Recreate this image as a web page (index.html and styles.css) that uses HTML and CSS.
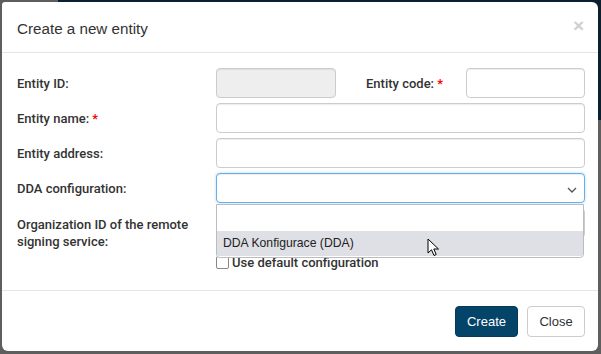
FILE: index.html
```html
<!DOCTYPE html>
<html>
<head>
<meta charset="utf-8">
<link rel="stylesheet" href="styles.css">
</head>
<body>
<div class="backdrop-dark"></div>
<div class="modal">
  <div class="modal-header">
    <h4 class="modal-title">Create a new entity</h4>
    <span class="close">×</span>
  </div>
  <div class="modal-body">
    <div class="row">
      <label class="lbl">Entity ID:</label>
      <div class="ctrl split">
        <input class="input input-id" disabled>
        <label class="lbl lbl-code">Entity code: <span class="req">*</span></label>
        <input class="input input-code">
      </div>
    </div>
    <div class="row">
      <label class="lbl">Entity name: <span class="req">*</span></label>
      <div class="ctrl"><input class="input"></div>
    </div>
    <div class="row">
      <label class="lbl">Entity address:</label>
      <div class="ctrl"><input class="input"></div>
    </div>
    <div class="row">
      <label class="lbl">DDA configuration:</label>
      <div class="ctrl select-wrap">
        <div class="input select">
          <svg class="chev" width="10" height="6" viewBox="0 0 10 6"><path d="M1 1 L5 5 L9 1" fill="none" stroke="#555" stroke-width="1.3"/></svg>
        </div>
        <div class="dropdown">
          <div class="opt"></div>
          <div class="opt active">DDA Konfigurace (DDA)</div>
          <svg class="cursor" width="14" height="20" viewBox="0 0 14 20"><path d="M1 1 L1 15 L4.5 11.8 L7 17.5 L9.2 16.5 L6.8 11 L11.5 11 Z" fill="#fff" stroke="#000" stroke-width="1" stroke-linejoin="round"/></svg>
        </div>
      </div>
    </div>
    <div class="row row-org">
      <label class="lbl">Organization ID of the remote signing service:</label>
      <div class="ctrl"><input class="input"></div>
    </div>
    <div class="row row-check">
      <span class="lbl"></span>
      <label class="check"><span class="box"></span>Use default configuration</label>
    </div>
  </div>
  <div class="modal-footer">
    <button class="btn btn-primary">Create</button>
    <button class="btn btn-default">Close</button>
  </div>
</div>
</body>
</html>
```

FILE: styles.css
```css
* { box-sizing: border-box; }
html, body { margin: 0; padding: 0; }
body {
  width: 601px;
  height: 354px;
  background: #5e5e5e;
  font-family: "Liberation Sans", Arial, sans-serif;
  color: #333;
  position: relative;
  overflow: hidden;
  padding: 2px 3px 3px 2px;
}
.backdrop-dark {
  position: absolute;
  left: 58px;
  top: 0;
  right: 0;
  height: 120px;
  background: #0b1f2e;
}
.modal {
  position: relative;
  width: 596px;
  height: 349px;
  background: #fff;
  border-radius: 3px 6px 6px 6px;
  display: flex;
  flex-direction: column;
}
.modal-header {
  height: 51px;
  border-bottom: 1px solid #e5e5e5;
  display: flex;
  align-items: center;
  justify-content: space-between;
  padding: 0 15px 0 15px;
}
.modal-title {
  margin: 0;
  font-size: 15.2px;
  font-weight: normal;
  color: #333;
  padding-top: 2px;
}
.close {
  font-size: 19px;
  font-weight: bold;
  color: #cfcfcf;
  line-height: 1;
  margin-right: -1px;
  margin-top: -3px;
}
.modal-body {
  padding: 15px 13px 0 15px;
  height: 238px;
  border-bottom: 1px solid #e5e5e5;
}
.row {
  display: flex;
  align-items: center;
  height: 30px;
  margin-bottom: 5px;
}
.lbl {
  width: 199px;
  flex: none;
  font-family: Roboto, "Liberation Sans", sans-serif;
  font-size: 13px;
  font-weight: 500;
  color: #333;
}
.req { color: #e00; }
.ctrl { flex: 1; min-width: 0; height: 30px; display: flex; align-items: center; }
.input {
  display: block;
  width: 100%;
  height: 30px;
  border: 1px solid #ccc;
  border-radius: 4px;
  background: #fff;
  box-shadow: inset 0 1px 1px rgba(0,0,0,0.075);
  font: inherit;
  margin: 0;
  padding: 0;
}
.input[disabled] { background: #eee; }
.input-id { width: 120px; flex: none; }
.lbl-code { width: 100px; margin-left: 30px; }
.input-code { flex: 1; width: auto; min-width: 0; }
.select-wrap { position: relative; }
.select {
  border-color: #66afe9;
  box-shadow: inset 0 1px 1px rgba(0,0,0,0.075), 0 0 3px rgba(102,175,233,0.5);
  position: relative;
}
.chev { position: absolute; right: 7px; top: 13px; }
.dropdown {
  position: absolute;
  left: 0;
  top: 31px;
  width: 368px;
  height: 54px;
  background: #fff;
  border: 1px solid #bcbcbc;
  border-radius: 0 0 4px 4px;
  z-index: 5;
}
.opt {
  height: 26px;
  font-size: 12.2px;
  color: #222;
  padding-left: 6px;
  line-height: 25px;
}
.opt.active { background: #dfdfe6; height: 25px; }
.cursor { position: absolute; left: 210px; top: 33px; }
.row-org { height: 30px; margin-bottom: 16px; align-items: flex-start; }
.row-org .lbl { line-height: 17px; padding-top: 8px; padding-right: 10px; }
.row-check { height: 16px; }
.check {
  display: flex;
  align-items: center;
  font-family: Roboto, "Liberation Sans", sans-serif;
  font-size: 13px;
  font-weight: 500;
  color: #333;
}
.box {
  width: 13px;
  height: 13px;
  border: 1px solid #888;
  border-radius: 2px;
  margin-right: 3px;
  background: #fff;
}
.modal-footer {
  flex: 1;
  display: flex;
  justify-content: flex-end;
  align-items: center;
  gap: 9px;
  padding: 0 13px 0 15px;
}
.btn {
  height: 31px;
  font-family: "Liberation Sans", Arial, sans-serif;
  font-size: 13px;
  border-radius: 4px;
  padding: 0 10px;
}
.btn-primary {
  background: #054469;
  color: #fff;
  border: 1px solid #043a5a;
  width: 63px;
}
.btn-default {
  background: #fff;
  color: #333;
  border: 1px solid #ccc;
  width: 58px;
}
```
